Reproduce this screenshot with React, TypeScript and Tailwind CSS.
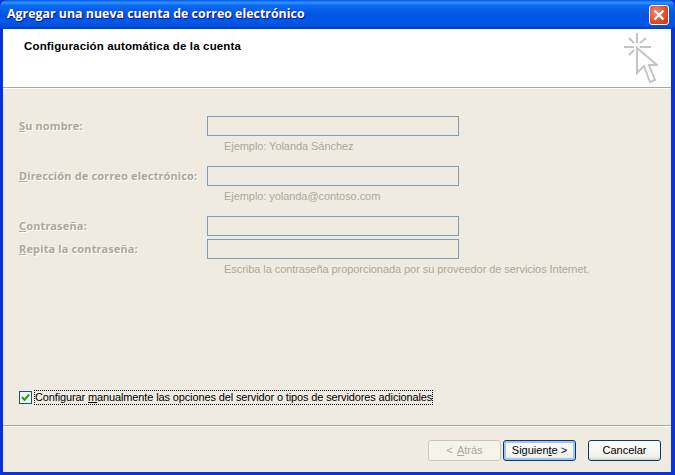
const LABEL = "text-[#aca899] [text-shadow:1px_1px_0_#fff] font-bold font-['Noto_Sans',sans-serif] tracking-[0.15px]";
const HINT = "text-[#aca899] text-[11px] leading-[13px] tracking-[-0.06px] whitespace-nowrap";

function Field({ mnemonic, label, hint, className = "" }: { mnemonic: string; label: string; hint?: string; className?: string }) {
  return (
    <div className={className}>
      <div className="flex items-center h-[20px]">
        <label className={`${LABEL} w-[188px] text-[11px] whitespace-nowrap`}>
          <span className="underline">{mnemonic}</span>
          {label}
        </label>
        <div className="w-[252px] h-[20px] border border-[#7f9db9]" />
      </div>
      {hint && <div className={`${HINT} ml-[205px] mt-[4px]`}>{hint}</div>}
    </div>
  );
}

function Button({ children, className = "" }: { children: React.ReactNode; className?: string }) {
  return (
    <button className={`w-[73px] h-[21px] rounded-[3px] border text-[11px] flex items-center justify-center ${className}`}>
      {children}
    </button>
  );
}

export default function App() {
  return (
    <div className="w-[675px] h-[475px] overflow-hidden flex flex-col bg-[#0831d9] font-['Liberation_Sans',Arial,sans-serif] text-black">
      {/* Title bar */}
      <div className="h-[29px] shrink-0 rounded-t-[7px] flex items-center pl-[7px] pr-[6px] bg-[linear-gradient(180deg,#0058ee_0%,#3593ff_10%,#0a6af0_18%,#0055e5_50%,#0056e8_80%,#0050d8_92%,#003ac0_100%)]">
        <span className="font-['Open_Sans','DejaVu_Sans',sans-serif] font-bold text-[12.4px] text-white [text-shadow:1px_1px_0_#0f1089] flex-1">
          Agregar una nueva cuenta de correo electrónico
        </span>
        <div className="w-[20px] h-[20px] rounded-[3px] border border-white bg-[radial-gradient(circle_at_35%_35%,#f0896b,#d9431e_70%,#c23a1a)] flex items-center justify-center">
          <svg width="12" height="12" viewBox="0 0 12 12">
            <path d="M1.5 1.5 L10.5 10.5 M10.5 1.5 L1.5 10.5" stroke="#fff" strokeWidth="2.2" />
          </svg>
        </div>
      </div>

      {/* Client area */}
      <div className="flex-1 ml-[3px] mb-[3px] mr-[4px] bg-[#efebe0] flex flex-col min-h-0">
        <div className="h-[58px] shrink-0 bg-white flex justify-between pl-[21px] pr-[13px] border-b border-[#aca899] box-content">
          <div className="font-bold text-[11.5px] tracking-[0.15px] pt-[9px]">Configuración automática de la cuenta</div>
          <svg width="34" height="51" viewBox="0 0 34 51" className="mt-[4px]" fill="none" stroke="#c4c4c4" strokeWidth="2">
            <path d="M13 0 V10 M0 14 H10 M16 14 H27 M5 5 L10 10 M22 5 L16 10 M5 22 L10 17" />
            <path d="M13 15 V40 L20 33 L26 49 L31 47 L25 32 L33 32 Z" />
          </svg>
        </div>
        <div className="h-px shrink-0 bg-white" />

        <div className="pl-[16px] pt-[27px] flex-1 flex flex-col">
          <Field mnemonic="S" label="u nombre:" hint="Ejemplo: Yolanda Sánchez" />
          <Field mnemonic="D" label="irección de correo electrónico:" hint="Ejemplo: yolanda@contoso.com" className="mt-[13px]" />
          <Field mnemonic="C" label="ontraseña:" className="mt-[13px]" />
          <Field mnemonic="R" label="epita la contraseña:" hint="Escriba la contraseña proporcionada por su proveedor de servicios Internet." className="mt-[3px]" />

          <div className="mt-[114px] flex items-center h-[15px]">
            <div className="w-[13px] h-[13px] border border-[#1c5180] bg-[#f4f4ee] flex items-center justify-center">
              <svg width="9" height="9" viewBox="0 0 9 9">
                <path d="M1 4 L3.5 7 L8 1.5" fill="none" stroke="#21a121" strokeWidth="2" />
              </svg>
            </div>
            <span className="ml-[2px] text-[11px] leading-[13px] tracking-[-0.13px] border border-dotted border-black whitespace-nowrap">
              Configurar <span className="underline">m</span>anualmente las opciones del servidor o tipos de servidores adicionales
            </span>
          </div>
        </div>

        <div className="h-px shrink-0 bg-[#aca899]" />
        <div className="h-px shrink-0 bg-white" />
        <div className="h-[45px] shrink-0 flex pl-[425px] pt-[13px]">
          <Button className="border-[#c9c7ba] bg-[#f5f4ea] text-[#aca899]">
            &lt; <span className="underline ml-1">A</span>trás
          </Button>
          <Button className="ml-[2px] border-[#003c74] bg-[linear-gradient(180deg,#fff,#f0f0ea_85%,#d6d0c5)] shadow-[inset_0_0_0_2px_#a6c2ee]">
            <span>Siguien<span className="underline">t</span>e &gt;</span>
          </Button>
          <Button className="ml-[12px] border-[#003c74] bg-[linear-gradient(180deg,#fff,#f0f0ea_85%,#d6d0c5)]">
            Cancelar
          </Button>
        </div>
      </div>
    </div>
  );
}
